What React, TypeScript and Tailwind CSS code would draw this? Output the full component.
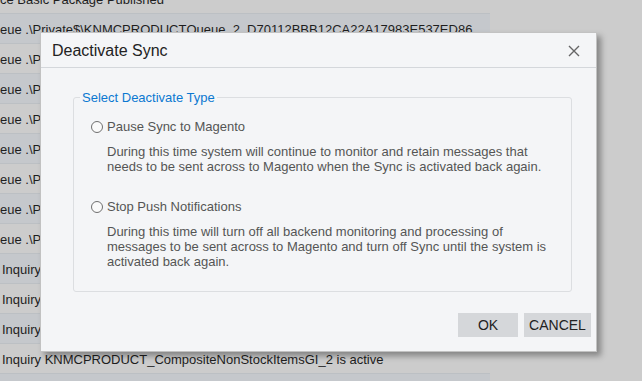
import React from "react";

const rows: { text: string; dark: boolean; indent?: boolean }[] = [
  { text: "ce Basic Package Published", dark: false },
  { text: "eue .\\Private$\\KNMCPRODUCTQueue_2_D70112BBB12CA22A17983E537ED86", dark: true },
  { text: "eue .\\Private$\\KNMCPRODUCTQueue_2", dark: false },
  { text: "eue .\\Private$\\KNMCPRODUCTQueue_2", dark: true },
  { text: "eue .\\Private$\\KNMCPRODUCTQueue_2", dark: false },
  { text: "eue .\\Private$\\KNMCPRODUCTQueue_2", dark: true },
  { text: "eue .\\Private$\\KNMCPRODUCTQueue_2", dark: false },
  { text: "eue .\\Private$\\KNMCPRODUCTQueue_2", dark: true },
  { text: "eue .\\Private$\\KNMCPRODUCTQueue_2", dark: false },
  { text: "Inquiry KNMCPRODUCT_CompositeNonStockItemsGI_2 is active", dark: true, indent: true },
  { text: "Inquiry KNMCPRODUCT_CompositeNonStockItemsGI_2 is active", dark: false, indent: true },
  { text: "Inquiry KNMCPRODUCT_CompositeNonStockItemsGI_2 is active", dark: true, indent: true },
  { text: "Inquiry KNMCPRODUCT_CompositeNonStockItemsGI_2 is active", dark: false, indent: true },
  { text: "", dark: true },
];

function Radio() {
  return (
    <span className="inline-block w-[12px] h-[12px] rounded-full border border-[#6f6f6f] bg-[#fafafa] shrink-0" />
  );
}

export default function App() {
  return (
    <div
      className="relative w-[642px] h-[381px] overflow-hidden bg-[#cccccc]"
      style={{ fontFamily: '"Liberation Sans", Arial, sans-serif' }}
    >
      <div className="w-[490px] mt-[-16px] flex flex-col">
        {rows.map((r, i) => (
          <div
            key={i}
            className={
              "h-[30px] flex items-center pt-[2px] border-b border-[#bcc0c4] text-[13px] text-[#1e1e1e] whitespace-nowrap overflow-hidden " +
              (r.dark ? "bg-[#c5c8cc]" : "bg-[#cccccc]")
            }
          >
            <span className={r.indent ? "pl-[2px]" : "pl-0"}>{r.text}</span>
          </div>
        ))}
      </div>

      <div className="absolute left-[40px] top-[32px] w-[557px] h-[320px] bg-[#f4f5f7] border border-[#c2c2c2] shadow-[4px_4px_6px_rgba(0,0,0,0.35)] flex flex-col">
        <div className="h-[35px] shrink-0 flex items-center justify-between pl-[11px] pr-[16px] border-b border-[#d4d7db]">
          <span className="text-[16px] text-[#222222] leading-[20px] pt-[1px]">Deactivate Sync</span>
          <svg width="12" height="12" viewBox="0 0 12 12" className="mt-[2px]">
            <path d="M1 1 L11 11 M11 1 L1 11" stroke="#666666" strokeWidth="1.4" />
          </svg>
        </div>

        <fieldset className="mt-[22px] ml-[32px] mr-[24px] border border-[#dcdee1] rounded-[3px] px-0 pb-[22px]">
          <legend className="ml-[6px] px-[2px] text-[13px] leading-[15px] text-[#0b78d1]">
            Select Deactivate Type
          </legend>
          <div className="text-[13px] leading-[15px] text-[#555555] pt-[14px] pl-[17px] pr-[10px]">
            <div className="flex items-center gap-[4px] h-[15px]">
              <Radio />
              <span>Pause Sync to Magento</span>
            </div>
            <div className="mt-[10px] pl-[16px]">
              During this time system will continue to monitor and retain messages that
              <br />
              needs to be sent across to Magento when the Sync is activated back again.
            </div>
            <div className="mt-[25px] flex items-center gap-[4px] h-[15px]">
              <Radio />
              <span>Stop Push Notifications</span>
            </div>
            <div className="mt-[10px] pl-[16px]">
              During this time will turn off all backend monitoring and processing of
              <br />
              messages to be sent across to Magento and turn off Sync until the system is
              <br />
              activated back again.
            </div>
          </div>
        </fieldset>

        <div className="mt-[21px] mr-[5px] flex justify-end gap-[6px]">
          <button className="w-[60px] h-[24px] bg-[#d5d7da] text-[14px] text-[#222222]">OK</button>
          <button className="w-[67px] h-[24px] bg-[#d5d7da] text-[14px] text-[#222222]">CANCEL</button>
        </div>
      </div>
    </div>
  );
}
